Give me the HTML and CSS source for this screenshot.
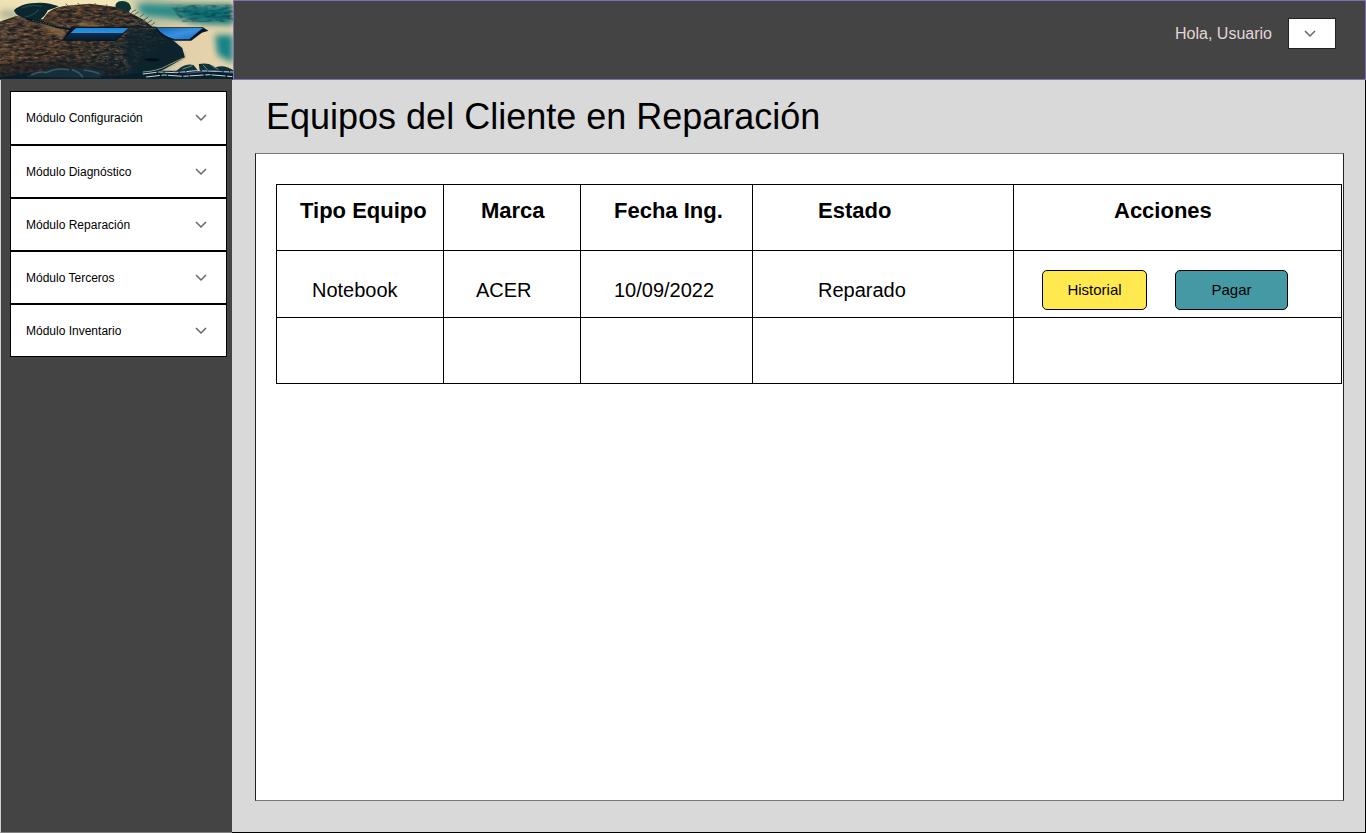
FILE: index.html
```html
<!DOCTYPE html>
<html lang="es">
<head>
<meta charset="utf-8">
<meta name="viewport" content="width=device-width, initial-scale=1">
<title>Equipos del Cliente en Reparación</title>
<link rel="stylesheet" href="styles.css">
</head>
<body>
<div class="app">
  <header class="topbar">
    <svg class="logo" viewBox="0 0 702 237" preserveAspectRatio="none" role="img" aria-label="Capibara con lentes de sol">
      <defs>
        <linearGradient id="sky" x1="0" x2="1" y1="0" y2="0">
          <stop offset="0" stop-color="#efe2b4"/><stop offset=".5" stop-color="#f3e6b8"/><stop offset=".64" stop-color="#b9bf9e"/><stop offset=".8" stop-color="#e4d0a8"/><stop offset="1" stop-color="#e8d6ad"/>
        </linearGradient>
        <linearGradient id="coat" x1="0" x2="1" y1="0" y2=".5">
          <stop offset="0" stop-color="#5c4c40"/><stop offset=".35" stop-color="#4f3729"/><stop offset=".6" stop-color="#3d302a"/><stop offset=".82" stop-color="#1c2b31"/><stop offset="1" stop-color="#0b2631"/>
        </linearGradient>
        <linearGradient id="lens" x1="0" x2="0" y1="0" y2="1">
          <stop offset="0" stop-color="#1c84d2"/><stop offset=".4" stop-color="#2a93df"/><stop offset=".44" stop-color="#0b2d4c"/><stop offset="1" stop-color="#081d30"/>
        </linearGradient>
        <linearGradient id="lens2" x1="0" x2="1" y1="0" y2="1">
          <stop offset="0" stop-color="#1468b4"/><stop offset=".5" stop-color="#3a90e0"/><stop offset="1" stop-color="#1d6dbd"/>
        </linearGradient>
        <filter id="soft" x="-20%" y="-20%" width="140%" height="140%"><feGaussianBlur stdDeviation="10"/></filter>
        <filter id="blend" x="-20%" y="-20%" width="140%" height="140%"><feGaussianBlur stdDeviation="5"/></filter>
        <filter id="edge"><feGaussianBlur stdDeviation="1.5"/></filter>
        <filter id="fur" x="0" y="0" width="100%" height="100%" color-interpolation-filters="sRGB">
          <feTurbulence type="fractalNoise" baseFrequency=".07 .16" numOctaves="3" seed="8"/>
          <feColorMatrix values="0 0 0 0 .62  0 0 0 0 .45  0 0 0 0 .3  2.4 0 0 0 -.95"/>
          <feComposite in2="SourceGraphic" operator="in"/>
        </filter>
        <filter id="shade" x="0" y="0" width="100%" height="100%" color-interpolation-filters="sRGB">
          <feTurbulence type="fractalNoise" baseFrequency=".04 .13" numOctaves="3" seed="3"/>
          <feColorMatrix values="0 0 0 0 .05  0 0 0 0 .1  0 0 0 0 .12  0 3 0 0 -1.15"/>
          <feComposite in2="SourceGraphic" operator="in"/>
        </filter>
      </defs>
      <rect width="702" height="237" fill="url(#sky)"/>
      <g filter="url(#soft)">
        <path d="M410 12 H702 V76 L610 72 L520 56 L430 46Z" fill="#2b8c88"/>
        <path d="M540 20 H702 V68 H570Z" fill="#0c7277"/>
        <path d="M648 105 H702 V190 L655 165Z" fill="#188286"/>
        <path d="M0 30 H60 V56 H0Z" fill="#b4b493"/>
      </g>
      <path d="M510 14 H702 V66 H550Z" filter="url(#shade)" opacity=".4"/>
      <path d="M348 24 Q344 4 368 3 Q393 4 395 25 L384 42Z" fill="#0b3035" filter="url(#edge)"/>
      <path d="M-10 68 L48 48 L130 58 Q145 24 198 17 L270 11 L345 20 L393 38 L435 61 L474 92 L520 120 L549 144 L557 172 L526 190 L485 213 L420 229 L-10 240Z" fill="url(#coat)" filter="url(#edge)"/>
      <path d="M0 66 L48 50 L130 58 Q145 24 198 19 L270 13 L345 22 L393 40 L435 63 L474 92 L500 120 L440 160 L400 205 L370 225 L0 237Z" filter="url(#fur)" opacity=".75"/>
      <path d="M0 66 L48 50 L130 58 Q145 24 198 19 L270 13 L345 22 L393 40 L435 63 L474 92 L500 120 L440 160 L400 205 L370 225 L0 237Z" filter="url(#shade)" opacity=".8"/>
      <path d="M395 88 L475 90 L520 120 L556 170 L500 202 L430 225 L385 200 L370 135Z" fill="#0d222a" opacity=".7" filter="url(#blend)"/>
      <path d="M0 195 L90 185 L200 178 L370 195 V237 H0Z" fill="#171e20" opacity=".6" filter="url(#blend)"/>
      <path d="M120 70 L195 90 L190 112 L150 98Z M240 64 L290 69 L305 82 H235Z" fill="#a9804f" opacity=".6" filter="url(#blend)"/>
      <g filter="url(#edge)">
        <path d="M42 31 Q62 13 94 10 Q124 6 150 11 L177 19 Q163 26 144 31 Q136 50 116 62 Q92 65 70 53 Q48 48 42 31Z" fill="#07252e"/>
        <path d="M65 24 Q95 11 127 19 M76 50 Q99 48 117 29" fill="none" stroke="#184950" stroke-width="4"/>
        <path d="M396 37 l14 -8 M405 43 l13-7 M421 51 l12-9 M432 61 l15-10 M444 69 l14-9 M455 76 l12-9 M205 18 l-7-7 M240 15 l-6-6 M290 15 l-5-6 M325 20 l-5-7" stroke="#56644d" stroke-width="3" fill="none"/>
      </g>
      <path d="M78 56 L130 68 L170 80 L220 89" stroke="#07171e" stroke-width="6" fill="none"/>
      <path d="M98 61 L170 78 L221 84" stroke="#52777b" stroke-width="2" stroke-dasharray="4 4" fill="none"/>
      <path d="M216 80 H393 L350 123 L186 122Z" fill="#071522"/>
      <path d="M229 84 H387 L347 120 L192 118Z" fill="url(#lens)"/>
      <path d="M466 82 H611 L628 92 L608 98 L576 122 H525 Q487 112 470 91Z" fill="#071522"/>
      <path d="M472 84 H611 L570 118 H526 Q491 108 472 84Z" fill="url(#lens2)"/>
      <path d="M387 82 H470" stroke="#122330" stroke-width="4"/>
      <path d="M430 179 Q453 168 484 180 Q461 189 430 179Z" fill="#02111a" filter="url(#edge)"/>
      <path d="M430 216 Q475 214 505 196 L552 174" stroke="#8d9580" stroke-width="3" fill="none" filter="url(#edge)"/>
      <path d="M0 230 L75 220 L210 224 L350 228 L490 212 L702 212 V237 H0Z" fill="#071f2a"/>
      <g filter="url(#edge)">
        <path d="M76 230 Q100 216 130 218 Q140 203 175 202 Q215 202 240 234Z M210 204 Q270 199 318 217 L300 234 L234 232Z" fill="#132d38"/>
        <path d="M94 225 Q119 212 140 218 M135 220 Q170 202 209 209 M216 209 Q240 216 250 232 M252 210 Q287 214 300 222" stroke="#3c5660" stroke-width="5" fill="none"/>
        <path d="M530 214 Q556 188 583 195 L598 214Z M599 192 Q639 184 659 213 L602 215Z M650 202 Q675 192 702 210 V216 H650Z" fill="#103139"/>
        <path d="M550 207 L580 197 M612 195 L626 211 M636 196 L658 209" stroke="#6f8b7b" stroke-width="3"/>
      </g>
      <path d="M430 222 L480 216 L530 218 L590 212 L702 216 M440 231 L495 225 L550 229 L630 224 L702 230" stroke="#c6d8d8" stroke-width="3" stroke-dasharray="42 5 16 3" fill="none"/>
      <path d="M520 215 L570 219 L645 212 L702 219" stroke="#7567b4" stroke-width="2" fill="none"/>
    </svg>
    <div class="userbar">
      <span class="greeting">Hola, Usuario</span>
      <button class="user-menu" type="button" aria-label="Menú de usuario">
        <svg class="chevron" viewBox="0 0 12 8" aria-hidden="true"><path d="M1 1 L6 6 L11 1"/></svg>
      </button>
    </div>
  </header>
  <nav class="sidebar" aria-label="Módulos">
    <button class="module" type="button">Módulo Configuración<svg class="chevron" viewBox="0 0 12 8" aria-hidden="true"><path d="M1 1 L6 6 L11 1"/></svg></button>
    <button class="module" type="button">Módulo Diagnóstico<svg class="chevron" viewBox="0 0 12 8" aria-hidden="true"><path d="M1 1 L6 6 L11 1"/></svg></button>
    <button class="module" type="button">Módulo Reparación<svg class="chevron" viewBox="0 0 12 8" aria-hidden="true"><path d="M1 1 L6 6 L11 1"/></svg></button>
    <button class="module" type="button">Módulo Terceros<svg class="chevron" viewBox="0 0 12 8" aria-hidden="true"><path d="M1 1 L6 6 L11 1"/></svg></button>
    <button class="module" type="button">Módulo Inventario<svg class="chevron" viewBox="0 0 12 8" aria-hidden="true"><path d="M1 1 L6 6 L11 1"/></svg></button>
  </nav>
  <main class="content">
    <h1 class="title">Equipos del Cliente en Reparación</h1>
    <section class="panel">
      <table class="devices">
        <colgroup><col class="col-type"><col class="col-brand"><col class="col-date"><col class="col-status"><col></colgroup>
        <thead>
          <tr><th class="type" scope="col">Tipo Equipo</th><th class="brand" scope="col">Marca</th><th class="date" scope="col">Fecha Ing.</th><th class="status" scope="col">Estado</th><th class="actions" scope="col">Acciones</th></tr>
        </thead>
        <tbody>
          <tr>
            <td class="type">Notebook</td><td class="brand">ACER</td><td class="date">10/09/2022</td><td class="status">Reparado</td>
            <td class="actions"><div class="action-list"><button class="action history" type="button">Historial</button><button class="action pay" type="button">Pagar</button></div></td>
          </tr>
          <tr><td></td><td></td><td></td><td></td><td></td></tr>
        </tbody>
      </table>
    </section>
  </main>
</div>
</body>
</html>
```

FILE: styles.css
```css
* {
  box-sizing: border-box;
}

body {
  margin: 0;
  color: #000;
  background: #d9d9d9;
  font-family: "Liberation Sans", Arial, sans-serif;
}

button {
  font-family: inherit;
  color: inherit;
  cursor: pointer;
}

.app {
  display: grid;
  grid-template-columns: 232px 1fr;
  grid-template-rows: auto 1fr;
  min-height: 100vh;
}

.topbar {
  grid-column: 1 / -1;
  display: flex;
  justify-content: space-between;
  height: 80px;
  background: #444;
}

.logo {
  flex: none;
  width: 233px;
  height: 79px;
}

.userbar {
  flex: 1;
  display: flex;
  align-items: flex-start;
  justify-content: flex-end;
  gap: 16px;
  padding: 17px 29px 0 0;
  border: 1px solid #7f70b3;
}

.greeting {
  color: #e3d6d6;
  font-size: 16px;
  line-height: 32px;
}

.user-menu {
  display: flex;
  align-items: center;
  justify-content: center;
  width: 48px;
  height: 31px;
  padding: 0 5px 0 0;
  background: #fff;
  border: 1px solid #222;
}

.chevron {
  flex: none;
  width: 12px;
  height: 8px;
  fill: none;
  stroke: #666;
  stroke-width: 1.5;
}

.sidebar {
  display: flex;
  flex-direction: column;
  padding: 11px 5px 0 9px;
  background: #444;
  border-left: 1px solid #d0d0d0;
  border-bottom: 1px solid #808080;
}

.module {
  display: flex;
  align-items: center;
  justify-content: space-between;
  height: 53px;
  padding: 0 19px 0 15px;
  background: #fff;
  border: 1px solid #000;
  font-size: 12px;
}

.module:first-child {
  height: 54px;
}

.content {
  display: flex;
  flex-direction: column;
  padding: 13px 21px 31px 23px;
  border-right: 1px solid #000;
  border-bottom: 1px solid #000;
}

.title {
  margin: 0 0 12px 11px;
  font-size: 36px;
  font-weight: 400;
  line-height: 48px;
}

.panel {
  flex: 1;
  padding: 30px 1px 30px 20px;
  background: #fff;
  border: 1px solid #222;
  border-top-color: #777;
  border-bottom-color: #777;
}

.devices {
  width: 100%;
  table-layout: fixed;
  border-collapse: collapse;
}

.col-type {
  width: 167px;
}

.col-brand {
  width: 137px;
}

.col-date {
  width: 172px;
}

.col-status {
  width: 261px;
}

.devices th,
.devices td {
  height: 66px;
  padding: 0;
  border: 1px solid #000;
  text-align: left;
}

.devices th {
  padding-bottom: 14px;
  font-size: 22px;
}

.devices td {
  height: 67px;
  padding-top: 12px;
  font-size: 20px;
}

.devices tr:last-child td {
  height: 66px;
}

.devices .type {
  padding-left: 23px;
}

.devices td.type {
  padding-left: 35px;
}

.devices .brand {
  padding-left: 37px;
}

.devices td.brand {
  padding-left: 32px;
}

.devices .date {
  padding-left: 33px;
}

.devices .status {
  padding-left: 65px;
}

.devices .actions {
  padding-left: 100px;
}

.devices td.actions {
  padding-left: 28px;
}

.action-list {
  display: flex;
  gap: 28px;
}

.action {
  width: 105px;
  height: 40px;
  padding: 0 0 2px;
  border: 1px solid #000;
  border-radius: 5px;
  font-size: 15px;
}

.history {
  background: #ffe94e;
}

.pay {
  width: 113px;
  background: #4599a4;
}
```
